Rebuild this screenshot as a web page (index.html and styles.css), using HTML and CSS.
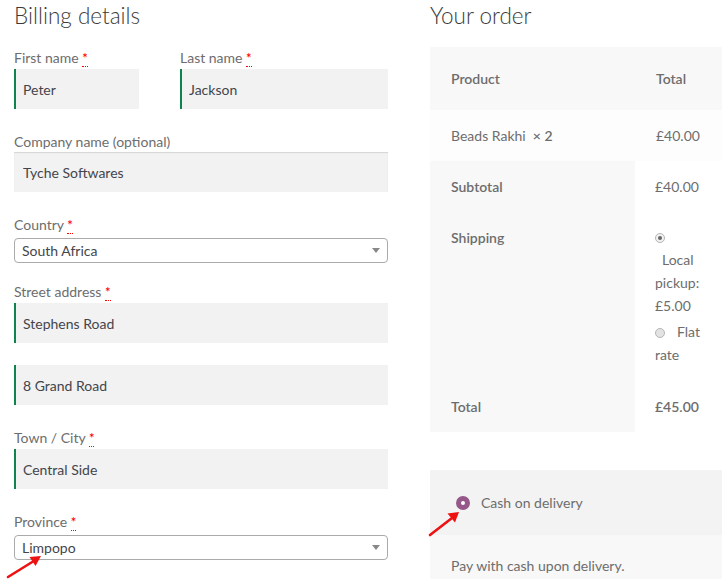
FILE: index.html
```html
<!DOCTYPE html>
<html>
<head>
<meta charset="utf-8">
<title>Checkout</title>
<link rel="stylesheet" href="styles.css">
</head>
<body>
<div class="page">
  <section class="billing">
    <h3 class="title">Billing details</h3>
    <div class="form">
      <div class="row two">
        <div class="field valid">
          <label>First name <abbr class="req">*</abbr></label>
          <input type="text" value="Peter">
        </div>
        <div class="field valid">
          <label>Last name <abbr class="req">*</abbr></label>
          <input type="text" value="Jackson">
        </div>
      </div>
      <div class="row field">
        <label>Company name (optional)</label>
        <input type="text" value="Tyche Softwares">
      </div>
      <div class="row row-select field">
        <label>Country <abbr class="req">*</abbr></label>
        <div class="select"><span>South Africa</span><span class="caret"></span></div>
      </div>
      <div class="row field valid">
        <label>Street address <abbr class="req">*</abbr></label>
        <input type="text" value="Stephens Road">
        <input type="text" class="second" value="8 Grand Road">
      </div>
      <div class="row field valid">
        <label>Town / City <abbr class="req">*</abbr></label>
        <input type="text" value="Central Side">
      </div>
      <div class="row row-select field">
        <label>Province <abbr class="req">*</abbr></label>
        <div class="select"><span>Limpopo</span><span class="caret"></span></div>
      </div>
    </div>
  </section>

  <section class="order">
    <h3 class="title">Your order</h3>
    <table class="review">
      <colgroup><col class="col1"><col class="col2"></colgroup>
      <thead>
        <tr><th>Product</th><th>Total</th></tr>
      </thead>
      <tbody>
        <tr><td>Beads Rakhi&nbsp; <strong class="qty">×&nbsp;2</strong></td><td>£40.00</td></tr>
      </tbody>
      <tfoot>
        <tr><th>Subtotal</th><td>£40.00</td></tr>
        <tr>
          <th>Shipping</th>
          <td>
            <ul class="ship">
              <li>
                <span class="sradio checked"></span>
                <span class="sline indent">Local</span>
                <span class="sline">pickup:</span>
                <span class="sline">£5.00</span>
              </li>
              <li class="li2">
                <span class="sradio"></span><span class="flat">Flat</span>
                <span class="sline">rate</span>
              </li>
            </ul>
          </td>
        </tr>
        <tr><th>Total</th><td><strong>£45.00</strong></td></tr>
      </tfoot>
    </table>

    <div class="payment">
      <div class="method"><span class="pradio"></span><span>Cash on delivery</span></div>
      <div class="pbox">Pay with cash upon delivery.</div>
    </div>
  </section>
</div>

<svg class="arrows" width="722" height="579" viewBox="0 0 722 579">
  <line x1="8" y1="577" x2="33" y2="561.5" stroke="#ee1111" stroke-width="2.6" stroke-linecap="round"/>
  <polygon points="41,556 35.5,566 29.5,557" fill="#ee1111"/>
  <line x1="430" y1="535" x2="452" y2="518" stroke="#ee1111" stroke-width="2.6" stroke-linecap="round"/>
  <polygon points="459,512 455,522.5 447.5,513.5" fill="#ee1111"/>
</svg>
</body>
</html>
```

FILE: styles.css
```css
html, body {
  margin: 0;
  padding: 0;
  overflow: hidden;
  background: #fff;
}

body {
  font-family: Lato, "Liberation Sans", sans-serif;
  font-size: 14px;
  color: #6d6d6d;
  position: relative;
  width: 722px;
  height: 579px;
}

.page {
  display: flex;
  gap: 42px;
  padding-left: 14px;
  width: 800px;
}

.billing {
  width: 374px;
  flex: none;
}

.order {
  width: 330px;
  flex: none;
}

.title {
  margin: 0;
  font-size: 22.5px;
  font-weight: 300;
  line-height: 32px;
  color: #3a3a3a;
}

.form {
  margin-top: 15px;
}

.row {
  margin-bottom: 22px;
}

.row.two {
  display: grid;
  grid-template-columns: 125px 1fr;
  column-gap: 41px;
}

.row-select {
  margin-bottom: 18px;
}

label {
  display: block;
  line-height: 21px;
}

.req {
  color: red;
  text-decoration: none;
  border-bottom: 1px dotted red;
  font-weight: 600;
  font-size: 13px;
}

input {
  display: block;
  width: 100%;
  box-sizing: border-box;
  height: 40px;
  border: 0;
  margin: 0;
  background: #f2f2f2;
  padding: 0 9px;
  font: inherit;
  color: #43454b;
  box-shadow: inset 0 1px 1px rgba(0, 0, 0, 0.125);
  outline: none;
}

.valid input {
  box-shadow: inset 2px 0 0 #0f834d;
}

input.second {
  margin-top: 22px;
}

.select {
  margin-top: 2px;
  height: 25px;
  box-sizing: border-box;
  border: 1px solid #aaa;
  border-radius: 4px;
  background: #fff;
  display: flex;
  align-items: center;
  justify-content: space-between;
  padding: 0 7px 0 7px;
  color: #43454b;
}

.caret {
  width: 0;
  height: 0;
  border-left: 4px solid transparent;
  border-right: 4px solid transparent;
  border-top: 5px solid #888;
}

/* order table */
.review {
  margin-top: 15px;
  border-collapse: collapse;
  border-spacing: 0;
  table-layout: fixed;
  width: 330px;
}

.col1 { width: 205px; }
.col2 { width: 125px; }

.review th,
.review td {
  text-align: left;
  vertical-align: top;
  line-height: 21px;
  padding: 15px 20px 15px 21px;
}

.review th {
  font-weight: 600;
}

.review thead th {
  background: #f8f8f8;
  padding-top: 21px;
  padding-bottom: 21px;
}

.review tbody td {
  background: #fdfdfd;
}

.review tfoot th {
  background: #f8f8f8;
}

.review tfoot td {
  background: #fff;
  padding-left: 20px;
}

.review strong {
  font-weight: 600;
}

.ship {
  list-style: none;
  margin: -2px 0 0;
  padding: 0;
  line-height: 23px;
}

.ship li {
  display: block;
}

.li2 {
  margin-top: 3px;
}

.sline {
  display: block;
}

.indent {
  padding-left: 7px;
}

.sradio {
  display: inline-block;
  width: 10px;
  height: 10px;
  box-sizing: border-box;
  border-radius: 50%;
  border: 1px solid #b5b5b5;
  background: #e3e3e3;
  vertical-align: -1px;
  position: relative;
}

.sradio.checked {
  background: #f1f1f1;
}

.sradio.checked::after {
  content: "";
  position: absolute;
  left: 2px;
  top: 2px;
  width: 4px;
  height: 4px;
  border-radius: 50%;
  background: #666;
}

.flat {
  margin-left: 12px;
}

/* payment */
.payment {
  margin-top: 38px;
  width: 330px;
}

.method {
  background: #f3f3f3;
  padding: 21px 21px 21px 26px;
  display: flex;
  align-items: center;
  gap: 11px;
  line-height: 23px;
}

.pradio {
  width: 4px;
  height: 4px;
  border: 5px solid #96588a;
  border-radius: 50%;
  background: #fff;
  flex: none;
}

.pbox {
  background: #f8f8f8;
  padding: 21px;
  line-height: 20px;
}

.arrows {
  position: absolute;
  left: 0;
  top: 0;
  pointer-events: none;
}
```
